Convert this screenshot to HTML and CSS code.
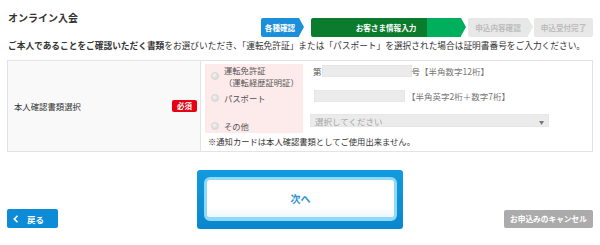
FILE: index.html
```html
<!DOCTYPE html>
<html lang="ja">
<head>
    <meta charset="UTF-8">
    <meta name="viewport" content="width=device-width, initial-scale=1.0">
    <title>オンライン入会</title>
    <link rel="stylesheet" href="styles.css">
</head>
<body>
    <div class="page">
        <div class="head">
            <h1 class="title">オンライン入会</h1>
            <ol class="steps">
                <li class="step step-done">各種確認</li>
                <li class="step step-now">お客さま情報入力</li>
                <li class="step step-next">申込内容確認</li>
                <li class="step step-last">申込受付完了</li>
            </ol>
        </div>

        <p class="lead"><strong>ご本人であることをご確認いただく書類</strong>をお選びいただき、「運転免許証」または「パスポート」を選択された場合は証明書番号をご入力ください。</p>

        <div class="form">
            <div class="label-cell">
                <span>本人確認書類選択</span>
                <span class="badge">必須</span>
            </div>
            <div class="input-cell">
                <div class="choice">
                    <div class="options">
                        <label class="option opt-license"><input type="radio" name="doc"><span>運転免許証<br>（運転経歴証明証）</span></label>
                        <label class="option opt-passport"><input type="radio" name="doc"><span>パスポート</span></label>
                        <label class="option opt-other"><input type="radio" name="doc"><span>その他</span></label>
                    </div>
                    <div class="fields">
                        <div class="field field-license">第<input type="text" class="box-license">号<span class="hint">【半角数字12桁】</span></div>
                        <div class="field field-passport"><input type="text" class="box-passport"><span class="hint hint-passport">【半角英字2桁＋数字7桁】</span></div>
                        <div class="field field-other">
                            <div class="select">選択してください<span class="caret">▼</span></div>
                        </div>
                    </div>
                </div>
                <p class="note">※通知カードは本人確認書類としてご使用出来ません。</p>
            </div>
        </div>

        <div class="actions">
            <div class="act-left">
                <a href="#" class="btn-back">
                    <svg width="6" height="8" viewBox="0 0 6 8"><path d="M4.5 0.8 L1.3 4 L4.5 7.2" fill="none" stroke="#fff" stroke-width="1.6"/></svg>
                    <span>戻る</span>
                </a>
            </div>
            <a href="#" class="btn-next"><span class="btn-next-inner">次へ</span></a>
            <div class="act-right">
                <a href="#" class="btn-cancel">お申込みのキャンセル</a>
            </div>
        </div>
    </div>
</body>
</html>
```

FILE: styles.css
```css
body {
    margin: 0;
    width: 600px;
    font-family: "Noto Sans CJK JP", "Noto Sans", sans-serif;
    color: #333;
    background-color: #fff;
}

.page {
    padding: 0 7px;
}

.head {
    display: flex;
    justify-content: space-between;
    align-items: flex-start;
    height: 40px;
}

.title {
    margin: 12px 0 0 1px;
    font-size: 10px;
    line-height: 12px;
    font-weight: bold;
}

.steps {
    display: flex;
    margin: 18px 0 0;
    padding: 0;
    list-style: none;
}

.step {
    position: relative;
    height: 19px;
    line-height: 19px;
    font-size: 7.6px;
    font-weight: bold;
    text-align: center;
    color: #fff;
    border-radius: 2px;
}

.step::after {
    content: "";
    position: absolute;
    left: 100%;
    top: 0;
    border-top: 9.5px solid transparent;
    border-bottom: 9.5px solid transparent;
    border-left: 5px solid transparent;
}

.step-done {
    width: 38px;
    margin-right: 12px;
    background-color: #1b8fd9;
    border-radius: 2px 0 0 2px;
}

.step-done::after {
    border-left-color: #1b8fd9;
}

.step-now {
    width: 150px;
    margin-right: 7px;
    background: linear-gradient(to right, #0b7b2d 0, #0b7b2d 116px, #00af5b 116px);
    border-radius: 2px 0 0 2px;
}

.step-now::after {
    border-left-color: #00af5b;
}

.step-next {
    width: 60px;
    margin-right: 6px;
    background-color: #e8e8e8;
    color: #bcbcbc;
    border-radius: 2px 0 0 2px;
}

.step-next::after {
    border-left-color: #e8e8e8;
}

.step-last {
    width: 59px;
    background-color: #e8e8e8;
    color: #bcbcbc;
}

.step-last::after {
    display: none;
}

.lead {
    margin: 0 0 8px 1px;
    font-size: 8.7px;
    line-height: 12px;
    white-space: nowrap;
}

.form {
    display: flex;
    border: 1px solid #e3e3e3;
}

.label-cell {
    width: 192px;
    display: flex;
    justify-content: space-between;
    align-items: center;
    padding: 0 3px 0 6px;
    box-sizing: border-box;
    background-color: #f9f9f9;
    font-size: 8.4px;
}

.badge {
    width: 25px;
    height: 12px;
    line-height: 12px;
    text-align: center;
    border-radius: 2px;
    background-color: #e60012;
    color: #fff;
    font-size: 7.5px;
    font-weight: bold;
}

.input-cell {
    flex: 1;
    border-left: 1px solid #e3e3e3;
    padding: 3px 0 4px 4px;
}

.choice {
    display: flex;
}

.options {
    width: 98px;
    padding-bottom: 1px;
    background-color: #fdeaea;
}

.option {
    display: flex;
    align-items: center;
    padding-left: 6px;
    font-size: 8.3px;
    line-height: 12px;
    color: #555;
}

.option input {
    appearance: none;
    width: 8px;
    height: 8px;
    margin: 0 5px 0 0;
    border: 1px solid #d6d6d6;
    border-radius: 50%;
    box-sizing: border-box;
    background: radial-gradient(circle at 40% 35%, #f4f4f4 0, #dadada 70%);
}

.opt-passport {
    margin-top: 4px;
}

.opt-other {
    margin-top: 16px;
}

.fields {
    font-size: 8.5px;
    color: #555;
}

.field {
    display: flex;
    align-items: center;
    white-space: nowrap;
}

.field input {
    height: 12px;
    margin: 0;
    padding: 0;
    border: 1px solid #e6e6e6;
    box-sizing: border-box;
    background-color: #ebebeb;
}

.field-license {
    height: 13px;
    margin-left: 10px;
}

.box-license {
    width: 90px;
}

.hint {
    color: #777;
}

.field-passport {
    height: 12px;
    margin: 13px 0 0 11px;
}

.box-passport {
    width: 91px;
}

.hint-passport {
    margin-left: 2px;
}

.field-other {
    margin: 12px 0 0 7px;
}

.select {
    width: 239px;
    height: 13px;
    line-height: 13px;
    padding-left: 4px;
    box-sizing: border-box;
    display: flex;
    justify-content: space-between;
    border: 1px solid #e6e6e6;
    background-color: #ebebeb;
    color: #a5a5a5;
}

.caret {
    margin-right: 4px;
    font-size: 5px;
    color: #777;
}

.note {
    margin: 2px 0 0 3px;
    font-size: 8.3px;
    line-height: 12px;
}

.actions {
    display: grid;
    grid-template-columns: 1fr 206px 1fr;
    align-items: end;
    margin-top: 18px;
}

.act-right {
    display: flex;
    justify-content: flex-end;
}

.btn-back {
    display: flex;
    align-items: center;
    width: 51px;
    height: 19px;
    margin-bottom: 1px;
    padding-left: 6px;
    box-sizing: border-box;
    border-radius: 2px;
    background-color: #0d8bd6;
    color: #fff;
    text-decoration: none;
    font-size: 8.5px;
    font-weight: bold;
}

.btn-back span {
    margin-left: 8px;
}

.btn-next {
    display: block;
    height: 59px;
    padding: 7px 6px 8px 7px;
    box-sizing: border-box;
    border-radius: 3px;
    background: linear-gradient(#139ade, #0a86cd);
    text-decoration: none;
}

.btn-next-inner {
    display: flex;
    justify-content: center;
    align-items: center;
    height: 100%;
    box-sizing: border-box;
    border-style: solid;
    border-color: #8fd9fa;
    border-width: 3px 3px 4px;
    border-radius: 6px;
    background: linear-gradient(#fff 75%, #eef6fb);
    color: #2a93d5;
    font-size: 10px;
    font-weight: bold;
}

.btn-cancel {
    display: block;
    width: 89px;
    height: 18px;
    line-height: 18px;
    margin-bottom: 1px;
    border-radius: 2px;
    background-color: #ababab;
    color: #fff;
    text-align: center;
    text-decoration: none;
    font-size: 7.7px;
    font-weight: bold;
}
```
